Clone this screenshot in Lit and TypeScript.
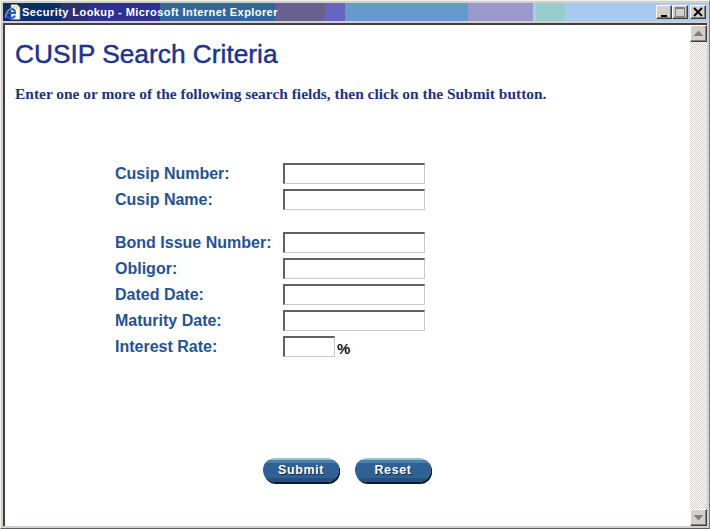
import { LitElement, html, css, svg } from "lit";
import { customElement } from "lit/decorators.js";

const upper = [
  { label: "Cusip Number:", narrow: false },
  { label: "Cusip Name:", narrow: false },
];
const lower = [
  { label: "Bond Issue Number:", narrow: false },
  { label: "Obligor:", narrow: false },
  { label: "Dated Date:", narrow: false },
  { label: "Maturity Date:", narrow: false },
  { label: "Interest Rate:", narrow: true },
];

const ieIcon = svg`<svg width="16" height="16" viewBox="0 0 16 16">
  <path d="M6 .5h6l3 3v12H6z" fill="#fff" stroke="#808080" stroke-width=".8"/>
  <path d="M1.500 9h8.500C10 6.500 8.500 5 6.300 5 3.500 5 1.500 7 1.500 9.800 1.500 12.500 3.500 14 6 14c2 0 3.500-1 4-2.500" fill="none" stroke="#1c5cd8" stroke-width="2"/>
  <path d="M0.500 14C-.5 11 4 4 10 2.500c2-.5 2 1 1 3" fill="none" stroke="#e8b830" stroke-width="1"/>
</svg>`;

@customElement("app-root")
export class AppRoot extends LitElement {
  static styles = css`
    :host {
      display: block;
      width: 710px;
      height: 529px;
      overflow: hidden;
    }
    .window {
      box-sizing: border-box;
      width: 710px;
      height: 529px;
      background: #d4d0c8;
      border-top: 1px solid #f2f0ec;
      border-left: 1px solid #f2f0ec;
      border-right: 1px solid #808080;
      border-bottom: 1px solid #606060;
      padding: 2px;
      display: flex;
      flex-direction: column;
    }
    .titlebar {
      flex: none;
      height: 18px;
      display: flex;
      align-items: center;
      padding: 0 1px 0 2px;
      gap: 1px;
      background: linear-gradient(
        90deg,
        #0a2f68 0 58px,
        #2c2f70 58px 85px,
        #2e2f8e 85px 157px,
        #33669a 157px 272px,
        #66618f 272px 322px,
        #6666c0 322px 342px,
        #6699cc 342px 465px,
        #9999cc 465px 530px,
        #a6caf0 530px 533px,
        #99cccc 533px 562px,
        #a6caf0 562px
      );
    }
    .icon {
      flex: none;
      display: flex;
    }
    .title {
      flex: 1;
      font: bold 11px "Liberation Sans", Arial, sans-serif;
      color: #fff;
      white-space: nowrap;
      letter-spacing: 0.43px;
    }
    .controls {
      flex: none;
      display: flex;
    }
    .ctl,
    .sb-btn {
      box-sizing: border-box;
      background: #d4d0c8;
      border-style: solid;
      border-width: 1px;
      border-color: #fff #404040 #404040 #fff;
      box-shadow: inset -1px -1px 0 #808080;
      display: flex;
      align-items: center;
      justify-content: center;
    }
    .ctl {
      width: 16px;
      height: 14px;
    }
    .ctl.close {
      margin-left: 2px;
    }
    .body {
      flex: 1;
      min-height: 0;
      margin-top: 2px;
      background: #fff;
      border-top: 2px solid #404040;
      border-left: 2px solid #404040;
      display: flex;
    }
    .page {
      flex: 1;
      min-width: 0;
      box-sizing: border-box;
      padding: 13px 0 0 10px;
      display: flex;
      flex-direction: column;
    }
    h1 {
      margin: 0;
      font: 26.300px/32px "Liberation Sans", Arial, sans-serif;
      color: #1c348c;
      -webkit-text-stroke: 0.45px #1c348c;
      white-space: nowrap;
    }
    .intro {
      margin: 15px 0 0;
      font: bold 15.450px/18px "Liberation Serif", "Times New Roman", serif;
      color: #1c3480;
      white-space: nowrap;
    }
    .form {
      margin: 60px 0 0 100px;
      display: flex;
      flex-direction: column;
      gap: 22px;
    }
    .group {
      display: flex;
      flex-direction: column;
      gap: 5px;
    }
    .row {
      display: flex;
      align-items: flex-start;
      height: 21px;
    }
    label {
      width: 168px;
      flex: none;
      font: bold 16px/22px "Liberation Sans", Arial, sans-serif;
      color: #1f5394;
      white-space: nowrap;
    }
    .field {
      box-sizing: border-box;
      width: 142px;
      height: 21px;
      background: #fff;
      border-style: solid;
      border-width: 2px 1px 1px 2px;
      border-color: #606060 #c8c8c8 #c8c8c8 #606060;
    }
    .field.narrow {
      width: 52px;
    }
    .pct {
      font: bold 15px/21px "Liberation Sans", Arial, sans-serif;
      color: #111;
      margin: 2px 0 0 2px;
    }
    .actions {
      margin: 101px 0 0 248px;
      display: flex;
      gap: 16px;
    }
    .btn {
      width: 76px;
      height: 24px;
      box-sizing: border-box;
      border: none;
      padding: 0;
      border-radius: 12px;
      background: linear-gradient(#8fc4c8 0 2px, #4a7fae 2px 5px, #2f6194 5px 20px, #28507c 20px);
      box-shadow: 1px 1px 0 #0a1a2c, 1px 2px 0 #0a1a2c;
      color: #fff;
      font: bold 12.500px "Liberation Sans", Arial, sans-serif;
      letter-spacing: 0.6px;
      text-shadow: 1px 1px 0 #12263c;
    }
    .scrollbar {
      flex: none;
      width: 17px;
      display: flex;
      flex-direction: column;
      background: repeating-conic-gradient(#d4d0c8 0 25%, #fff 0 50%) 0 0 / 2px 2px;
    }
    .track {
      flex: 1;
    }
    .sb-btn {
      width: 17px;
      height: 17px;
    }
  `;

  private row(item: { label: string; narrow: boolean }) {
    return html`<div class="row">
      <label>${item.label}</label>
      <div class="field ${item.narrow ? "narrow" : ""}"></div>
      ${item.narrow ? html`<span class="pct">%</span>` : ""}
    </div>`;
  }

  render() {
    return html`<div class="window">
      <div class="titlebar">
        <span class="icon">${ieIcon}</span>
        <span class="title">Security Lookup - Microsoft Internet Explorer</span>
        <div class="controls">
          <div class="ctl">
            <svg width="10" height="10" viewBox="0 0 10 10"><path d="M2 8h6v2H2z" fill="#000" /></svg>
          </div>
          <div class="ctl">
            <svg width="10" height="10" viewBox="0 0 10 10"><path d="M.5 .5h9v9h-9zM1 1.500h8" fill="none" stroke="#808080" /></svg>
          </div>
          <div class="ctl close">
            <svg width="10" height="10" viewBox="0 0 10 10"><path d="M1 1l8 8M9 1l-8 8" stroke="#000" stroke-width="1.800" /></svg>
          </div>
        </div>
      </div>
      <div class="body">
        <div class="page">
          <h1>CUSIP Search Criteria</h1>
          <p class="intro">Enter one or more of the following search fields, then click on the Submit button.</p>
          <div class="form">
            <div class="group">${upper.map((i) => this.row(i))}</div>
            <div class="group">${lower.map((i) => this.row(i))}</div>
          </div>
          <div class="actions">
            <button class="btn">Submit</button>
            <button class="btn">Reset</button>
          </div>
        </div>
        <div class="scrollbar">
          <div class="sb-btn">
            <svg width="11" height="7" viewBox="0 0 11 7"><path d="M5.500 0.500L10.500 6H.5z" fill="#808080" /></svg>
          </div>
          <div class="track"></div>
          <div class="sb-btn">
            <svg width="11" height="7" viewBox="0 0 11 7"><path d="M.5 1h10L5.500 6.500z" fill="#808080" /></svg>
          </div>
        </div>
      </div>
    </div>`;
  }
}
